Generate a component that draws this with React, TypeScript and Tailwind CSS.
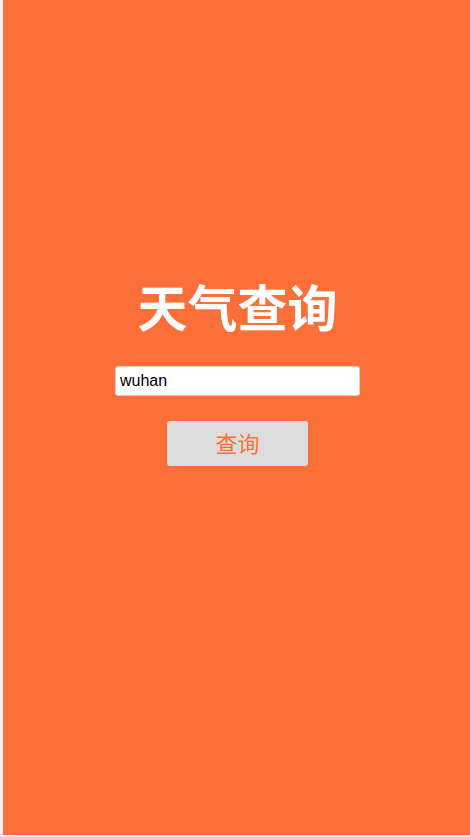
import { useState } from "react";

export default function App() {
    const [city, setCity] = useState("wuhan");

    return (
        <div className="w-[470px] h-[837px] bg-[#f0f0f0] pl-[3px] pb-[2px] flex">
            <div className="flex-1 bg-[#fc6f38] flex flex-col items-center pt-[278px] pl-[2px]" style={{ fontFamily: '"Liberation Sans", Arial, "Noto Sans CJK SC", sans-serif' }}>
                <h1 className="text-[50px] leading-[64px] font-bold text-white">天气查询</h1>
                <input
                    autoFocus
                    value={city}
                    onChange={(e) => setCity(e.target.value)}
                    className="mt-[24px] w-[245px] h-[30px] bg-white rounded-[3px] border border-[#d0d0d0] px-[4px] text-[16px] text-black outline-none"
                />
                <button className="mt-[25px] w-[141px] h-[45px] pt-[2px] bg-[#dcdcdc] rounded-[3px] text-[22px] text-[#fc6f38]">
                    查询
                </button>
            </div>
        </div>
    );
}
